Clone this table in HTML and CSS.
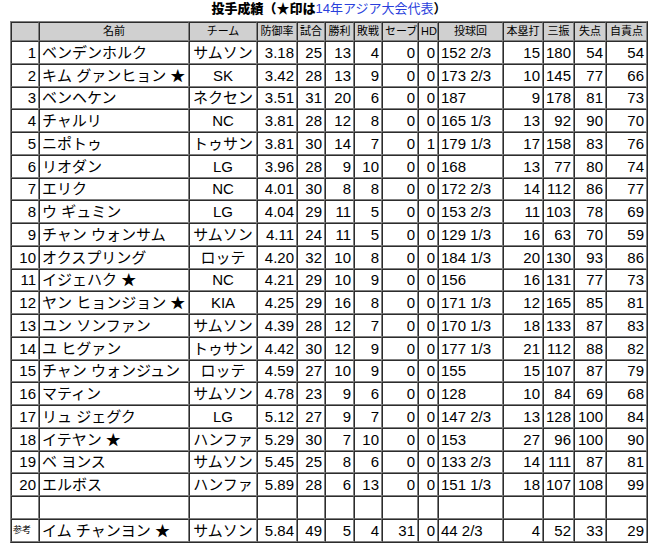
FILE: index.html
```html
<!DOCTYPE html>
<html lang="ja">
<head>
<meta charset="utf-8">
<title>投手成績</title>
<link rel="stylesheet" href="styles.css">
</head>
<body>
<div class="wrap">
  <div class="title"><b>投手成績（★印は</b><a class="link">14年アジア大会代表</a>）</div>
  <table class="stats">
    <thead>
      <tr>
        <th class="c0"></th><th class="c1">名前</th><th class="c2">チーム</th><th class="c3">防御率</th><th class="c4">試合</th><th class="c5">勝利</th><th class="c6">敗戦</th><th class="c7">セーブ</th><th class="c8">HD</th><th class="c9">投球回</th><th class="c10">本塁打</th><th class="c11">三振</th><th class="c12">失点</th><th class="c13">自責点</th>
      </tr>
    </thead>
    <tbody>
      <tr><td class="r">1</td><td class="l">ベンデンホルク</td><td class="c">サムソン</td><td class="r">3.18</td><td class="r">25</td><td class="r">13</td><td class="r">4</td><td class="r">0</td><td class="r">0</td><td class="l">152 2/3</td><td class="r">15</td><td class="r">180</td><td class="r">54</td><td class="r">54</td></tr>
      <tr><td class="r">2</td><td class="l">キム グァンヒョン ★</td><td class="c">SK</td><td class="r">3.42</td><td class="r">28</td><td class="r">13</td><td class="r">9</td><td class="r">0</td><td class="r">0</td><td class="l">173 2/3</td><td class="r">10</td><td class="r">145</td><td class="r">77</td><td class="r">66</td></tr>
      <tr><td class="r">3</td><td class="l">ベンヘケン</td><td class="c">ネクセン</td><td class="r">3.51</td><td class="r">31</td><td class="r">20</td><td class="r">6</td><td class="r">0</td><td class="r">0</td><td class="l">187</td><td class="r">9</td><td class="r">178</td><td class="r">81</td><td class="r">73</td></tr>
      <tr><td class="r">4</td><td class="l">チャルリ</td><td class="c">NC</td><td class="r">3.81</td><td class="r">28</td><td class="r">12</td><td class="r">8</td><td class="r">0</td><td class="r">0</td><td class="l">165 1/3</td><td class="r">13</td><td class="r">92</td><td class="r">90</td><td class="r">70</td></tr>
      <tr><td class="r">5</td><td class="l">ニポトゥ</td><td class="c">トゥサン</td><td class="r">3.81</td><td class="r">30</td><td class="r">14</td><td class="r">7</td><td class="r">0</td><td class="r">1</td><td class="l">179 1/3</td><td class="r">17</td><td class="r">158</td><td class="r">83</td><td class="r">76</td></tr>
      <tr><td class="r">6</td><td class="l">リオダン</td><td class="c">LG</td><td class="r">3.96</td><td class="r">28</td><td class="r">9</td><td class="r">10</td><td class="r">0</td><td class="r">0</td><td class="l">168</td><td class="r">13</td><td class="r">77</td><td class="r">80</td><td class="r">74</td></tr>
      <tr><td class="r">7</td><td class="l">エリク</td><td class="c">NC</td><td class="r">4.01</td><td class="r">30</td><td class="r">8</td><td class="r">8</td><td class="r">0</td><td class="r">0</td><td class="l">172 2/3</td><td class="r">14</td><td class="r">112</td><td class="r">86</td><td class="r">77</td></tr>
      <tr><td class="r">8</td><td class="l">ウ ギュミン</td><td class="c">LG</td><td class="r">4.04</td><td class="r">29</td><td class="r">11</td><td class="r">5</td><td class="r">0</td><td class="r">0</td><td class="l">153 2/3</td><td class="r">11</td><td class="r">103</td><td class="r">78</td><td class="r">69</td></tr>
      <tr><td class="r">9</td><td class="l">チャン ウォンサム</td><td class="c">サムソン</td><td class="r">4.11</td><td class="r">24</td><td class="r">11</td><td class="r">5</td><td class="r">0</td><td class="r">0</td><td class="l">129 1/3</td><td class="r">16</td><td class="r">63</td><td class="r">70</td><td class="r">59</td></tr>
      <tr><td class="r">10</td><td class="l">オクスプリング</td><td class="c">ロッテ</td><td class="r">4.20</td><td class="r">32</td><td class="r">10</td><td class="r">8</td><td class="r">0</td><td class="r">0</td><td class="l">184 1/3</td><td class="r">20</td><td class="r">130</td><td class="r">93</td><td class="r">86</td></tr>
      <tr><td class="r">11</td><td class="l">イジェハク ★</td><td class="c">NC</td><td class="r">4.21</td><td class="r">29</td><td class="r">10</td><td class="r">9</td><td class="r">0</td><td class="r">0</td><td class="l">156</td><td class="r">16</td><td class="r">131</td><td class="r">77</td><td class="r">73</td></tr>
      <tr><td class="r">12</td><td class="l">ヤン ヒョンジョン ★</td><td class="c">KIA</td><td class="r">4.25</td><td class="r">29</td><td class="r">16</td><td class="r">8</td><td class="r">0</td><td class="r">0</td><td class="l">171 1/3</td><td class="r">12</td><td class="r">165</td><td class="r">85</td><td class="r">81</td></tr>
      <tr><td class="r">13</td><td class="l">ユン ソンファン</td><td class="c">サムソン</td><td class="r">4.39</td><td class="r">28</td><td class="r">12</td><td class="r">7</td><td class="r">0</td><td class="r">0</td><td class="l">170 1/3</td><td class="r">18</td><td class="r">133</td><td class="r">87</td><td class="r">83</td></tr>
      <tr><td class="r">14</td><td class="l">ユ ヒグァン</td><td class="c">トゥサン</td><td class="r">4.42</td><td class="r">30</td><td class="r">12</td><td class="r">9</td><td class="r">0</td><td class="r">0</td><td class="l">177 1/3</td><td class="r">21</td><td class="r">112</td><td class="r">88</td><td class="r">82</td></tr>
      <tr><td class="r">15</td><td class="l">チャン ウォンジュン</td><td class="c">ロッテ</td><td class="r">4.59</td><td class="r">27</td><td class="r">10</td><td class="r">9</td><td class="r">0</td><td class="r">0</td><td class="l">155</td><td class="r">15</td><td class="r">107</td><td class="r">87</td><td class="r">79</td></tr>
      <tr><td class="r">16</td><td class="l">マティン</td><td class="c">サムソン</td><td class="r">4.78</td><td class="r">23</td><td class="r">9</td><td class="r">6</td><td class="r">0</td><td class="r">0</td><td class="l">128</td><td class="r">10</td><td class="r">84</td><td class="r">69</td><td class="r">68</td></tr>
      <tr><td class="r">17</td><td class="l">リュ ジェグク</td><td class="c">LG</td><td class="r">5.12</td><td class="r">27</td><td class="r">9</td><td class="r">7</td><td class="r">0</td><td class="r">0</td><td class="l">147 2/3</td><td class="r">13</td><td class="r">128</td><td class="r">100</td><td class="r">84</td></tr>
      <tr><td class="r">18</td><td class="l">イテヤン ★</td><td class="c">ハンファ</td><td class="r">5.29</td><td class="r">30</td><td class="r">7</td><td class="r">10</td><td class="r">0</td><td class="r">0</td><td class="l">153</td><td class="r">27</td><td class="r">96</td><td class="r">100</td><td class="r">90</td></tr>
      <tr><td class="r">19</td><td class="l">ベ ヨンス</td><td class="c">サムソン</td><td class="r">5.45</td><td class="r">25</td><td class="r">8</td><td class="r">6</td><td class="r">0</td><td class="r">0</td><td class="l">133 2/3</td><td class="r">14</td><td class="r">111</td><td class="r">87</td><td class="r">81</td></tr>
      <tr><td class="r">20</td><td class="l">エルボス</td><td class="c">ハンファ</td><td class="r">5.89</td><td class="r">28</td><td class="r">6</td><td class="r">13</td><td class="r">0</td><td class="r">0</td><td class="l">151 1/3</td><td class="r">18</td><td class="r">107</td><td class="r">108</td><td class="r">99</td></tr>
      <tr class="blank"><td></td><td></td><td></td><td></td><td></td><td></td><td></td><td></td><td></td><td></td><td></td><td></td><td></td><td></td></tr>
      <tr><td class="l ref">参考</td><td class="l">イム チャンヨン ★</td><td class="c">サムソン</td><td class="r">5.84</td><td class="r">49</td><td class="r">5</td><td class="r">4</td><td class="r">31</td><td class="r">0</td><td class="l">44 2/3</td><td class="r">4</td><td class="r">52</td><td class="r">33</td><td class="r">29</td></tr>
    </tbody>
  </table>
</div>
</body>
</html>
```

FILE: styles.css
```css
html, body {
  margin: 0;
  padding: 0;
  background: #ffffff;
}

body {
  font-family: "Liberation Sans", "Noto Sans CJK JP", sans-serif;
  color: #000000;
}

.wrap {
  width: 638px;
  margin-left: 10px;
}

.title {
  height: 21px;
  line-height: 17px;
  font-size: 13px;
  text-align: center;
  font-weight: bold;
  white-space: nowrap;
}

.title .link {
  color: #2a3fdc;
  font-weight: normal;
}

.stats {
  width: 638px;
  table-layout: fixed;
  border-collapse: separate;
  border-spacing: 0;
  border: 1px outset #808080;
}

.stats th,
.stats td {
  box-sizing: border-box;
  border: 1px inset #808080;
  padding: 0 2px;
  white-space: nowrap;
  overflow: hidden;
}

.stats th {
  height: 19px;
  background: #d0d0d0;
  font-size: 11px;
  font-weight: normal;
  text-align: center;
  line-height: 15px;
}

.stats td {
  height: 22.75px;
  font-size: 15px;
  line-height: 19px;
}

.c0 { width: 28px; }
.c1 { width: 150px; }
.c2 { width: 68px; }
.c3 { width: 40px; }
.c4 { width: 28px; }
.c5 { width: 29px; }
.c6 { width: 28px; }
.c7 { width: 36px; }
.c8 { width: 20px; }
.c9 { width: 65px; }
.c10 { width: 40px; }
.c11 { width: 31px; }
.c12 { width: 32px; }
.c13 { width: 41px; }

.r { text-align: right; }
.l { text-align: left; }
.c { text-align: center; }

.stats td.ref {
  font-size: 9px;
  padding-left: 1px;
}
```
